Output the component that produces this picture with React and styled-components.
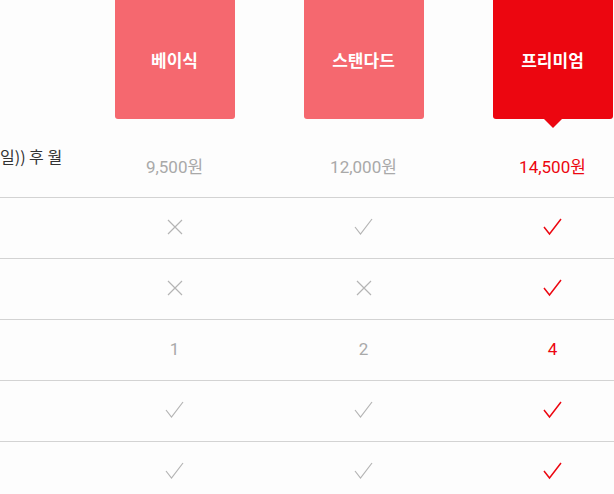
import styled, { createGlobalStyle } from 'styled-components';

const GlobalStyle = createGlobalStyle`
 html, body {
  margin: 0;
  padding: 0;
  background: #fdfdfd;
  overflow: hidden;
  font-family: Roboto, "Noto Sans CJK KR", sans-serif;
 }
`;

const RED = '#ec0610';
const LIGHT_RED = '#f5686f';
const GRAY = '#b4b4b4';

const Viewport = styled.div`
 width: 614px;
 height: 494px;
 overflow: hidden;
`;

const Table = styled.div`
 width: 647px;
`;

const Row = styled.div`
 display: grid;
 grid-template-columns: 80px repeat(3, 189px);
 height: ${(p) => p.height || 60}px;
 border-bottom: ${(p) => (p.noBorder ? 'none' : '1px solid #d3d3d3')};
`;

const Cell = styled.div`
 display: flex;
 align-items: ${(p) => (p.top ? 'flex-start' : 'center')};
 justify-content: center;
`;

const Label = styled.div`
 align-self: center;
 font-family: "Noto Sans CJK KR", sans-serif;
 font-size: 16px;
 line-height: 20px;
 color: #333;
 margin-top: -23px;
 white-space: nowrap;
`;

const PlanBox = styled.div`
 position: relative;
 width: 120px;
 height: 119px;
 display: flex;
 align-items: center;
 justify-content: center;
 background: ${(p) => (p.active ? RED : LIGHT_RED)};
 border-radius: 0 0 3px 3px;
 color: #fff;
 font-family: "Noto Sans CJK KR", sans-serif;
 font-weight: 700;
 font-size: 17px;

 ${(p) =>
  p.active &&
  `
  &::after {
   content: '';
   position: absolute;
   left: 50%;
   bottom: -9px;
   margin-left: -10px;
   border-left: 10px solid transparent;
   border-right: 10px solid transparent;
   border-top: 10px solid ${RED};
  }
 `}
`;

const Price = styled.span`
 font-size: 17px;
 margin-top: -3px;
 color: ${(p) => (p.active ? RED : '#a9a9a9')};
`;

const Check = ({ active }) => (
 <svg width="20" height="18" viewBox="0 0 20 18" style={{ marginTop: '-2px' }}>
  <polyline
   points="1,9 6.5,16 18,1"
   fill="none"
   stroke={active ? RED : GRAY}
   strokeWidth={active ? 1.5 : 1.2}
  />
 </svg>
);

const Cross = () => (
 <svg width="16" height="16" viewBox="0 0 16 16" style={{ marginTop: '-2px' }}>
  <path d="M1 1 L15 15 M15 1 L1 15" fill="none" stroke={GRAY} strokeWidth="1.2" />
 </svg>
);

const plans = [
 { name: '베이식', price: '9,500원' },
 { name: '스탠다드', price: '12,000원' },
 { name: '프리미엄', price: '14,500원', active: true },
];

const features = [
 ['x', 'v', 'v'],
 ['x', 'x', 'v'],
 ['1', '2', '4'],
 ['v', 'v', 'v'],
 ['v', 'v', 'v'],
];

const renderValue = (value, active) => {
 if (value === 'v') return <Check active={active} />;
 if (value === 'x') return <Cross />;
 return <Price active={active}>{value}</Price>;
};

const App = () => {
 return (
  <Viewport>
   <GlobalStyle />
   <Table>
    <Row height={137} noBorder>
     <div />
     {plans.map((plan) => (
      <Cell key={plan.name} top>
       <PlanBox active={plan.active}>{plan.name}</PlanBox>
      </Cell>
     ))}
    </Row>
    <Row>
     <Label>일)) 후 월</Label>
     {plans.map((plan) => (
      <Cell key={plan.name}>
       <Price active={plan.active}>{plan.price}</Price>
      </Cell>
     ))}
    </Row>
    {features.map((values, i) => (
     <Row key={i}>
      <div />
      {values.map((v, j) => (
       <Cell key={j}>{renderValue(v, j === 2)}</Cell>
      ))}
     </Row>
    ))}
   </Table>
  </Viewport>
 );
};

export default App;
